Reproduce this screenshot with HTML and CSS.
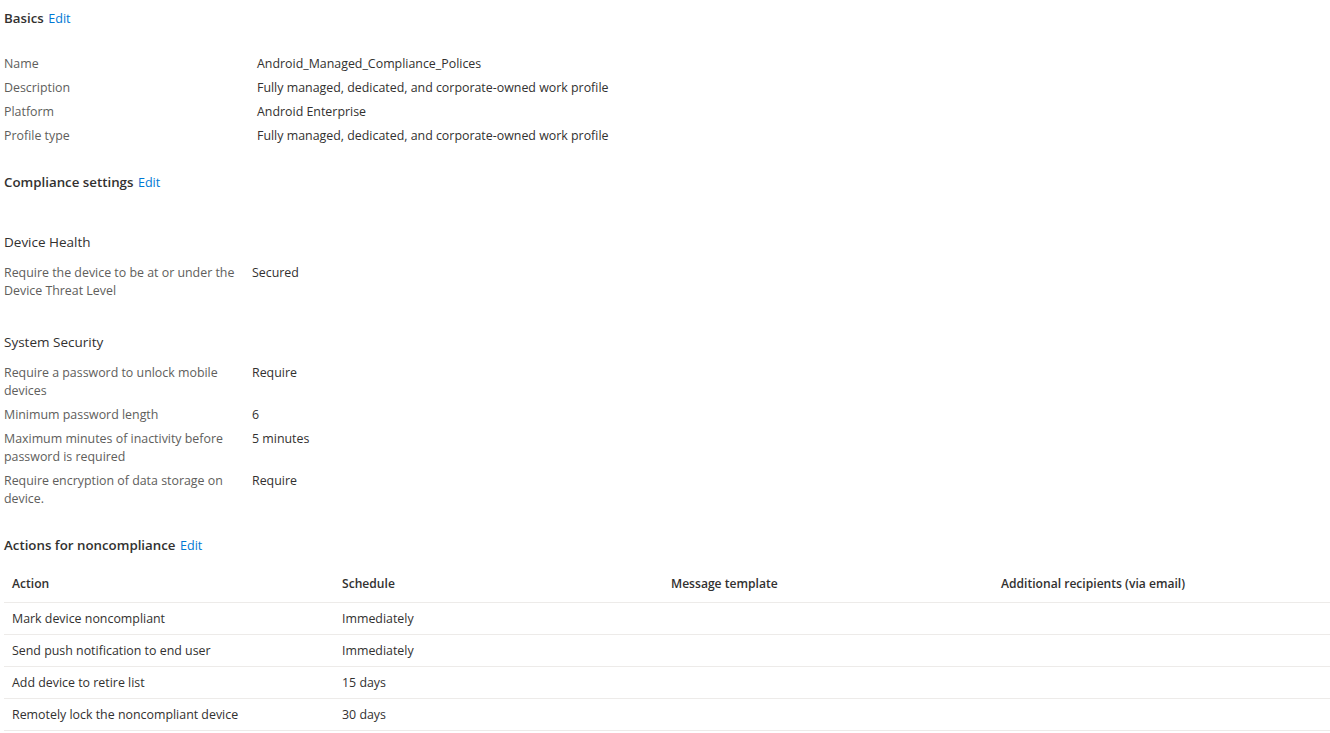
FILE: index.html
```html
<!DOCTYPE html>
<html lang="en">
<head>
  <meta charset="UTF-8">
  <title>Review + create</title>
  <link rel="stylesheet" href="styles.css">
</head>
<body>
  <div class="summary">
    <div class="section-header basics-header">Basics <a href="#" class="edit-link">Edit</a></div>
    <div class="kv-list basics">
      <div class="kv-row"><div class="kv-label">Name</div><div class="kv-value">Android_Managed_Compliance_Polices</div></div>
      <div class="kv-row"><div class="kv-label">Description</div><div class="kv-value">Fully managed, dedicated, and corporate-owned work profile</div></div>
      <div class="kv-row"><div class="kv-label">Platform</div><div class="kv-value">Android Enterprise</div></div>
      <div class="kv-row"><div class="kv-label">Profile type</div><div class="kv-value">Fully managed, dedicated, and corporate-owned work profile</div></div>
    </div>

    <div class="section-header">Compliance settings <a href="#" class="edit-link">Edit</a></div>

    <div class="group-title first-group">Device Health</div>
    <div class="kv-list settings">
      <div class="kv-row"><div class="kv-label">Require the device to be at or under the Device Threat Level</div><div class="kv-value">Secured</div></div>
    </div>

    <div class="group-title">System Security</div>
    <div class="kv-list settings">
      <div class="kv-row"><div class="kv-label">Require a password to unlock mobile devices</div><div class="kv-value">Require</div></div>
      <div class="kv-row"><div class="kv-label">Minimum password length</div><div class="kv-value">6</div></div>
      <div class="kv-row"><div class="kv-label">Maximum minutes of inactivity before password is required</div><div class="kv-value">5 minutes</div></div>
      <div class="kv-row"><div class="kv-label">Require encryption of data storage on device.</div><div class="kv-value">Require</div></div>
    </div>

    <div class="section-header">Actions for noncompliance <a href="#" class="edit-link">Edit</a></div>
    <table class="actions-table">
      <thead>
        <tr>
          <th class="col-action">Action</th>
          <th class="col-schedule">Schedule</th>
          <th class="col-template">Message template</th>
          <th>Additional recipients (via email)</th>
        </tr>
      </thead>
      <tbody>
        <tr><td>Mark device noncompliant</td><td>Immediately</td><td></td><td></td></tr>
        <tr><td>Send push notification to end user</td><td>Immediately</td><td></td><td></td></tr>
        <tr><td>Add device to retire list</td><td>15 days</td><td></td><td></td></tr>
        <tr><td>Remotely lock the noncompliant device</td><td>30 days</td><td></td><td></td></tr>
      </tbody>
    </table>
  </div>
</body>
</html>
```

FILE: styles.css
```css
* {
  margin: 0;
  padding: 0;
  box-sizing: border-box;
}

body {
  font-family: "Open Sans", "Noto Sans", sans-serif;
  font-size: 12.4px;
  color: #323130;
  background: #fff;
}

.summary {
  padding: 8px 0 0 4px;
}

.section-header {
  font-weight: 600;
  font-size: 13.3px;
  line-height: 20px;
  height: 20px;
  margin-top: 27px;
}

.basics-header {
  margin-top: 0;
}

.edit-link {
  color: #0078d4;
  text-decoration: none;
  font-weight: 400;
  font-size: 12.6px;
  margin-left: 1px;
}

.kv-list {
  display: flex;
  flex-direction: column;
  gap: 6px;
}

.basics {
  margin-top: 27px;
}

.kv-row {
  display: grid;
  grid-template-columns: 253px 1fr;
  line-height: 18px;
}

.settings .kv-row {
  grid-template-columns: 248px 1fr;
}

.settings .kv-label {
  padding-right: 10px;
}

.kv-label {
  color: #605e5c;
}

.kv-value {
  color: #323130;
}

.group-title {
  font-size: 13.5px;
  line-height: 20px;
  margin-top: 32px;
  margin-bottom: 12px;
}

.first-group {
  margin-top: 40px;
}

.actions-table {
  width: 100%;
  border-collapse: collapse;
  margin-top: 10px;
  table-layout: fixed;
}

.actions-table th,
.actions-table td {
  text-align: left;
  padding: 0 8px;
}

.actions-table .col-action,
.actions-table .col-template {
  width: 330px;
}

.actions-table .col-schedule {
  width: 329px;
}

.actions-table th {
  font-weight: 600;
  font-size: 12.1px;
  height: 37px;
  border-bottom: 1px solid #edebe9;
}

.actions-table td {
  height: 32px;
  border-bottom: 1px solid #edebe9;
}
```
